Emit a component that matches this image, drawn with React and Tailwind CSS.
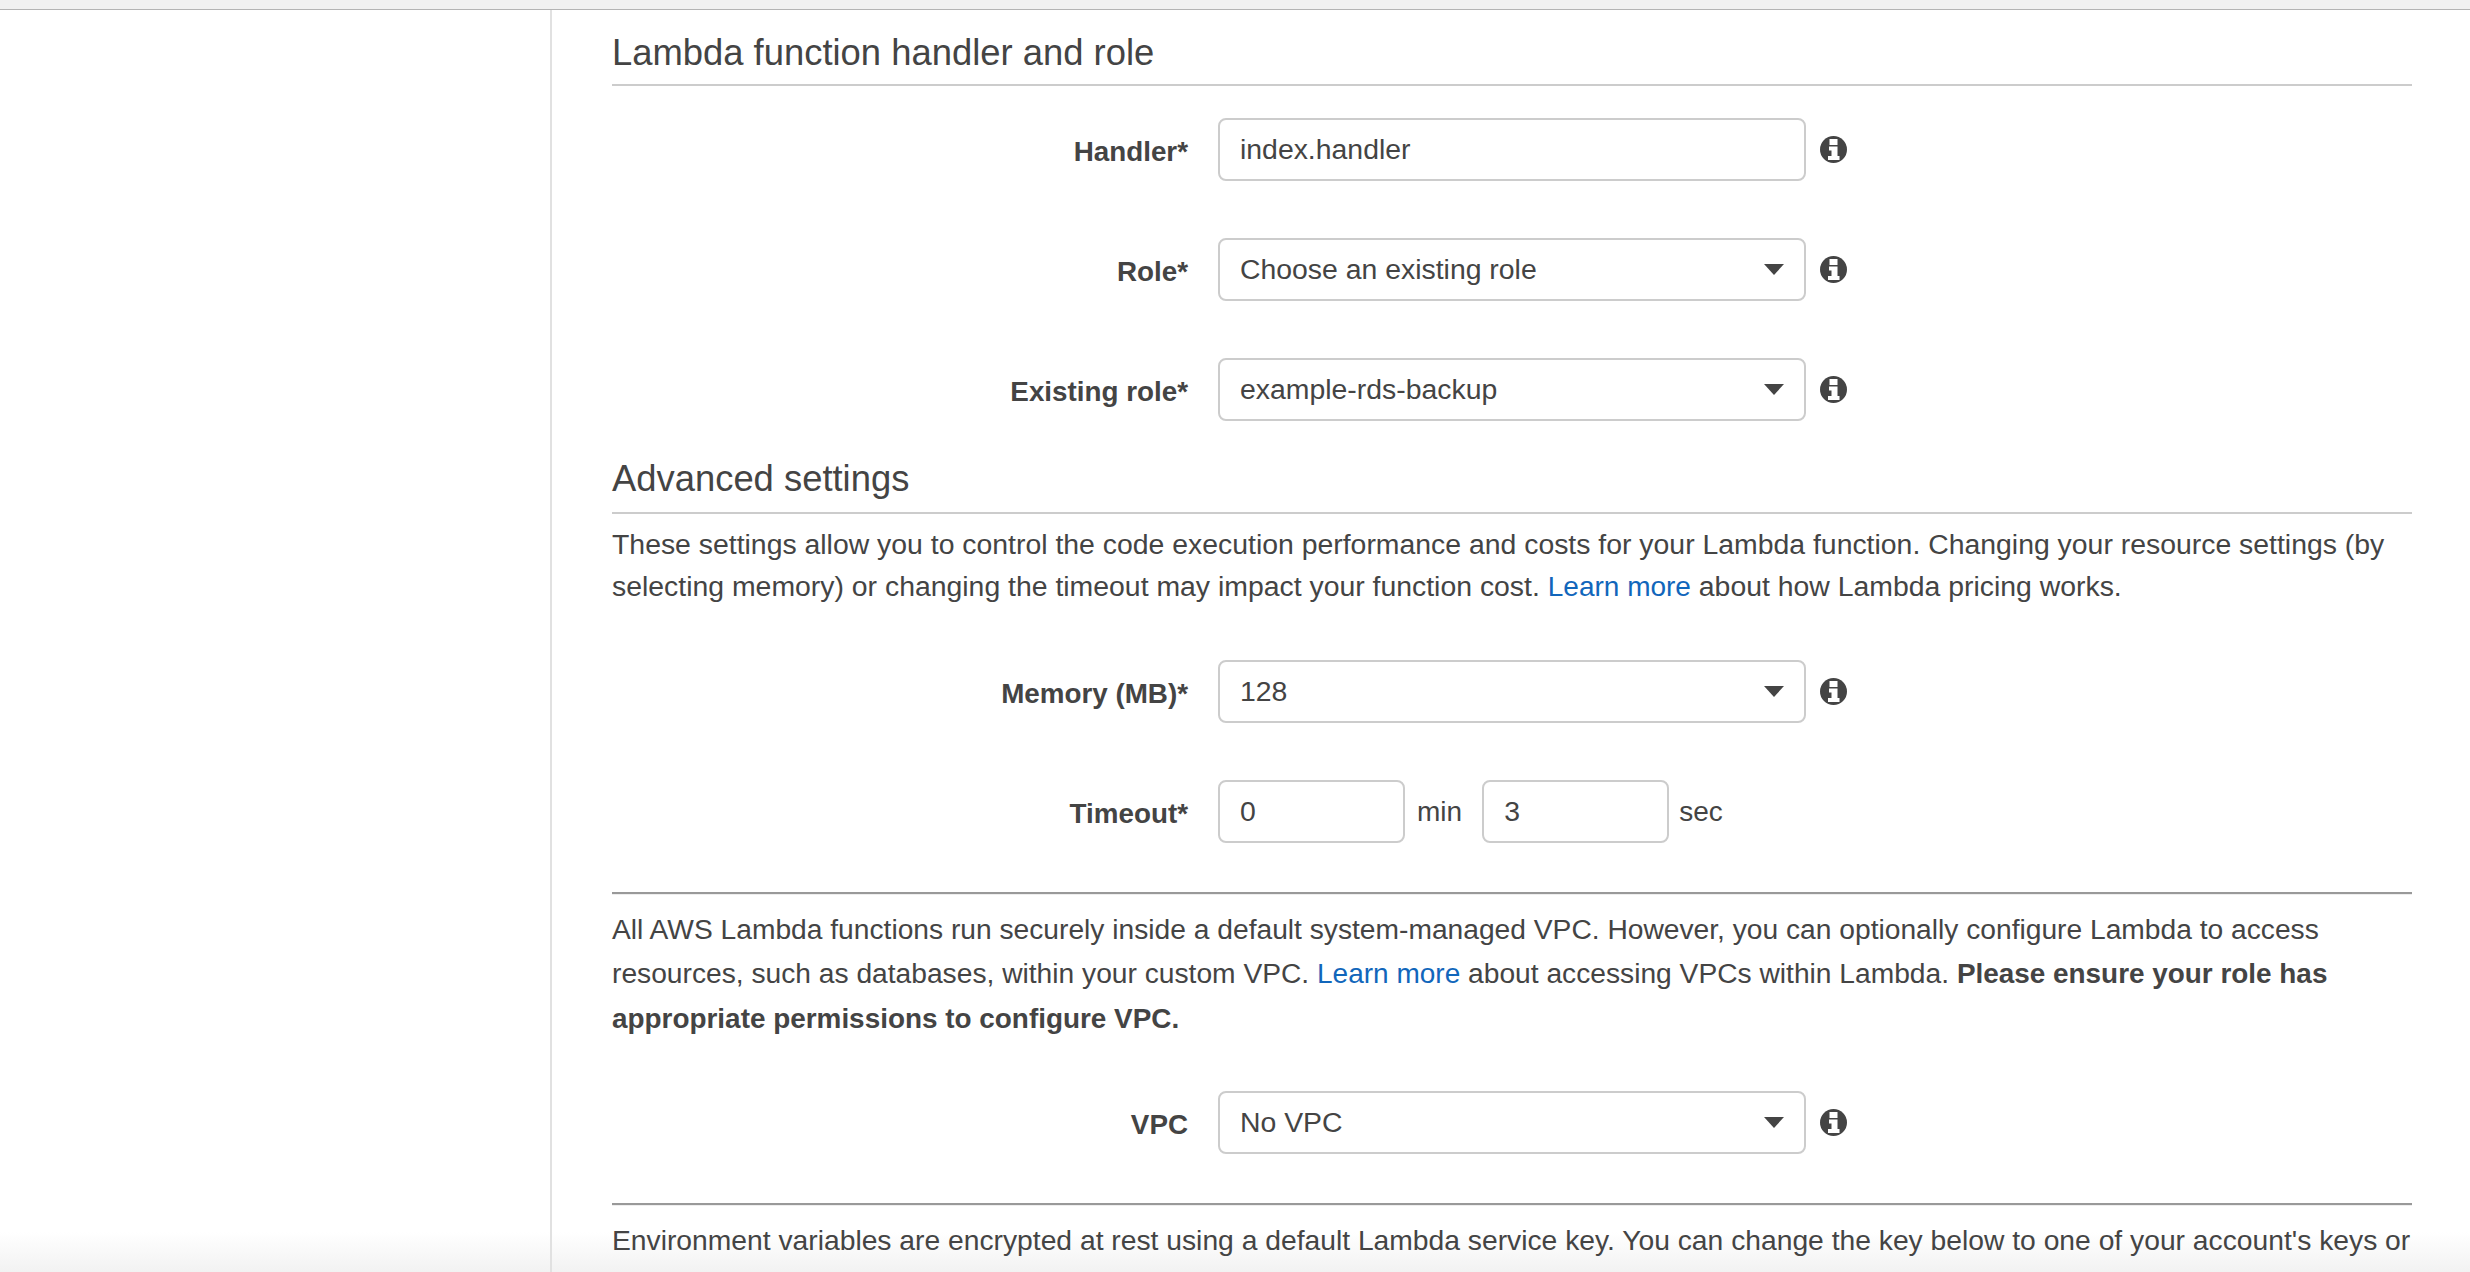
import React from 'react';

function InfoIcon() {
    return (
        <svg width="27" height="27" viewBox="0 0 27 27" className="shrink-0">
            <circle cx="13.5" cy="13.5" r="13.500" fill="#444444" />
            <rect x="9.500" y="3" width="8" height="6" fill="#ffffff" />
            <path d="M9 10.500h8.500V20h2v4H8v-4h3.500v-5.500H9z" fill="#ffffff" />
        </svg>
    );
}

function Caret() {
    return (
        <svg width="20" height="11" viewBox="0 0 20 11" className="shrink-0">
            <path d="M0 0h20L10 11z" fill="#444444" />
        </svg>
    );
}

function Row({ label, children, className = "" }) {
    return (
        <div className={`flex items-center h-[63px] ${className}`}>
            <label className="w-[606px] pr-[30px] pt-[4px] text-right font-bold text-[27.8px]">{label}</label>
            {children}
        </div>
    );
}

function Input({ value, className = "w-[588px]" }) {
    return (
        <div className={`flex items-center h-[63px] px-[20px] border-2 border-[#cccccc] rounded-lg bg-white text-[28.4px] ${className}`}>
            {value}
        </div>
    );
}

function Select({ value }) {
    return (
        <div className="flex items-center justify-between h-[63px] w-[588px] pl-[20px] pr-[20px] border-2 border-[#cccccc] rounded-lg bg-white text-[28.4px]">
            <span>{value}</span>
            <Caret />
        </div>
    );
}

function Info() {
    return (
        <div className="ml-[14px]">
            <InfoIcon />
        </div>
    );
}

function Heading({ children, className = "" }) {
    return (
        <h2 className={`text-[36.4px] leading-[44px] text-[#444444] border-b-2 border-[#cccccc] ${className}`}>
            {children}
        </h2>
    );
}

function Divider({ className = "" }) {
    return <div className={`h-[3px] border-t-2 border-[#999999] bg-[#eeeeee] ${className}`} />;
}

function Link({ children }) {
    return <a className="text-[#1166bb] text-[28px]">{children}</a>;
}

export default function App() {
    return (
        <div className="relative h-[1272px] overflow-hidden bg-white text-[28px] text-[#444444] font-['Liberation_Sans',Arial,sans-serif]">
            {/* faint fade along the bottom edge, sits behind the form */}
            <div className="absolute left-0 right-0 bottom-0 h-[40px] bg-gradient-to-b from-transparent to-[#f2f2f2]" />
            <div className="relative h-[10px] bg-[#f1f1f1] border-b border-[#b4b4b4]" />
            <div className="relative flex h-[1262px]">
                <div className="w-[552px] shrink-0 border-r-2 border-[#e1e1e1]" />
                <div className="w-[1860px] pl-[60px] pt-[21px]">
                    <Heading className="pb-[9px]">Lambda function handler and role</Heading>
                    <Row label="Handler*" className="mt-[32px]">
                        <Input value="index.handler" />
                        <Info />
                    </Row>
                    <Row label="Role*" className="mt-[57px]">
                        <Select value="Choose an existing role" />
                        <Info />
                    </Row>
                    <Row label="Existing role*" className="mt-[57px]">
                        <Select value="example-rds-backup" />
                        <Info />
                    </Row>
                    <Heading className="mt-[36px] pb-[11px]">Advanced settings</Heading>
                    <p className="mt-[9px] leading-[42px] text-[28.4px] whitespace-nowrap">
                        These settings allow you to control the code execution performance and costs for your Lambda function. Changing your resource settings (by
                        <br />
                        selecting memory) or changing the timeout may impact your function cost. <Link>Learn more</Link> about how Lambda pricing works.
                    </p>
                    <Row label="Memory (MB)*" className="mt-[52px]">
                        <Select value="128" />
                        <Info />
                    </Row>
                    <Row label="Timeout*" className="mt-[57px]">
                        <Input value="0" className="w-[187px]" />
                        <span className="ml-[12px] mr-[20px]">min</span>
                        <Input value="3" className="w-[187px]" />
                        <span className="ml-[10px]">sec</span>
                    </Row>
                    <Divider className="mt-[49px]" />
                    <p className="mt-[12px] leading-[44px] text-[28.2px] whitespace-nowrap">
                        All AWS Lambda functions run securely inside a default system-managed VPC. However, you can optionally configure Lambda to access
                        <br />
                        resources, such as databases, within your custom VPC. <Link>Learn more</Link> about accessing VPCs within Lambda. <b className="text-[27.9px]">Please ensure your role has</b>
                        <br />
                        <b className="text-[27.9px]">appropriate permissions to configure VPC.</b>
                    </p>
                    <Row label="VPC" className="mt-[50px]">
                        <Select value="No VPC" />
                        <Info />
                    </Row>
                    <Divider className="mt-[49px]" />
                    <p className="mt-[12px] leading-[44px] text-[28.25px] whitespace-nowrap">
                        Environment variables are encrypted at rest using a default Lambda service key. You can change the key below to one of your account's keys or
                    </p>
                </div>
            </div>
        </div>
    );
}
